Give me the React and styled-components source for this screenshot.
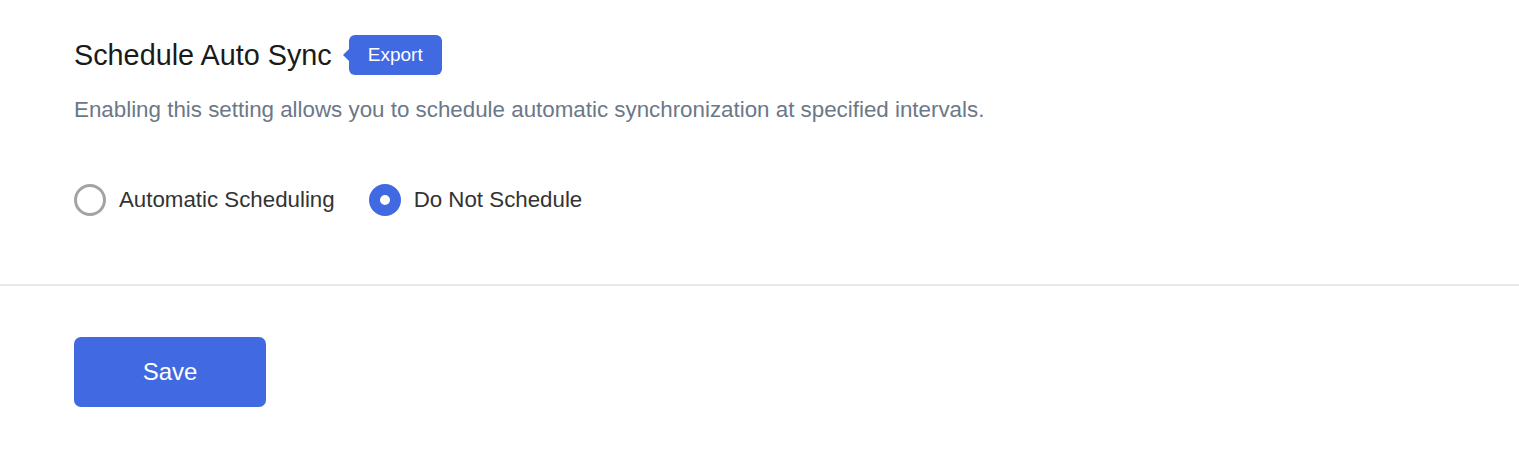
import React, { useState } from "react";
import styled, { createGlobalStyle } from "styled-components";

const GlobalStyle = createGlobalStyle`
  body {
    margin: 0;
    background: #ffffff;
    font-family: "Liberation Sans", Arial, sans-serif;
  }
`;

const Page = styled.div`
  width: 100%;
`;

const Section = styled.section`
  padding: 35px 74px 68px;
  border-bottom: 2px solid #e8eaf0;
`;

const TitleRow = styled.div`
  display: flex;
  align-items: center;
  gap: 17px;
  height: 40px;
`;

const Title = styled.h2`
  margin: 0;
  font-size: 28.8px;
  font-weight: 400;
  color: #1a1a1a;
`;

const Badge = styled.span`
  position: relative;
  display: inline-flex;
  align-items: center;
  justify-content: center;
  height: 40px;
  padding: 0 19px;
  box-sizing: border-box;
  background: #4169e1;
  color: #ffffff;
  font-size: 19px;
  border-radius: 6px;

  &::before {
    content: "";
    position: absolute;
    left: -6px;
    top: 50%;
    transform: translateY(-50%);
    border-top: 6px solid transparent;
    border-bottom: 6px solid transparent;
    border-right: 6px solid #4169e1;
  }
`;

const Description = styled.p`
  margin: 22px 0 0;
  font-size: 22.35px;
  line-height: 25px;
  color: #6b7888;
`;

const Options = styled.div`
  display: flex;
  align-items: center;
  gap: 34px;
  margin-top: 62px;
`;

const Option = styled.label`
  display: flex;
  align-items: center;
  gap: 13px;
  font-size: 22.3px;
  color: #333333;
  cursor: pointer;
`;

const Dot = styled.span`
  width: 32px;
  height: 32px;
  box-sizing: border-box;
  border-radius: 50%;
  border: ${(props) => (props.checked ? "11px solid #4169e1" : "3px solid #a3a3a3")};
  background: #ffffff;
`;

const Footer = styled.div`
  padding: 51px 74px;
`;

const SaveButton = styled.button`
  width: 192px;
  height: 70px;
  border: none;
  border-radius: 7px;
  background: #4169e1;
  color: #ffffff;
  font-family: "Liberation Sans", Arial, sans-serif;
  font-size: 24px;
  cursor: pointer;
`;

export default function App() {
  const [mode, setMode] = useState("none");
  return (
    <>
      <GlobalStyle />
      <Page>
        <Section>
          <TitleRow>
            <Title>Schedule Auto Sync</Title>
            <Badge>Export</Badge>
          </TitleRow>
          <Description>
            Enabling this setting allows you to schedule automatic synchronization at specified intervals.
          </Description>
          <Options>
            <Option onClick={() => setMode("auto")}>
              <Dot checked={mode === "auto"} />
              Automatic Scheduling
            </Option>
            <Option onClick={() => setMode("none")}>
              <Dot checked={mode === "none"} />
              Do Not Schedule
            </Option>
          </Options>
        </Section>
        <Footer>
          <SaveButton>Save</SaveButton>
        </Footer>
      </Page>
    </>
  );
}
